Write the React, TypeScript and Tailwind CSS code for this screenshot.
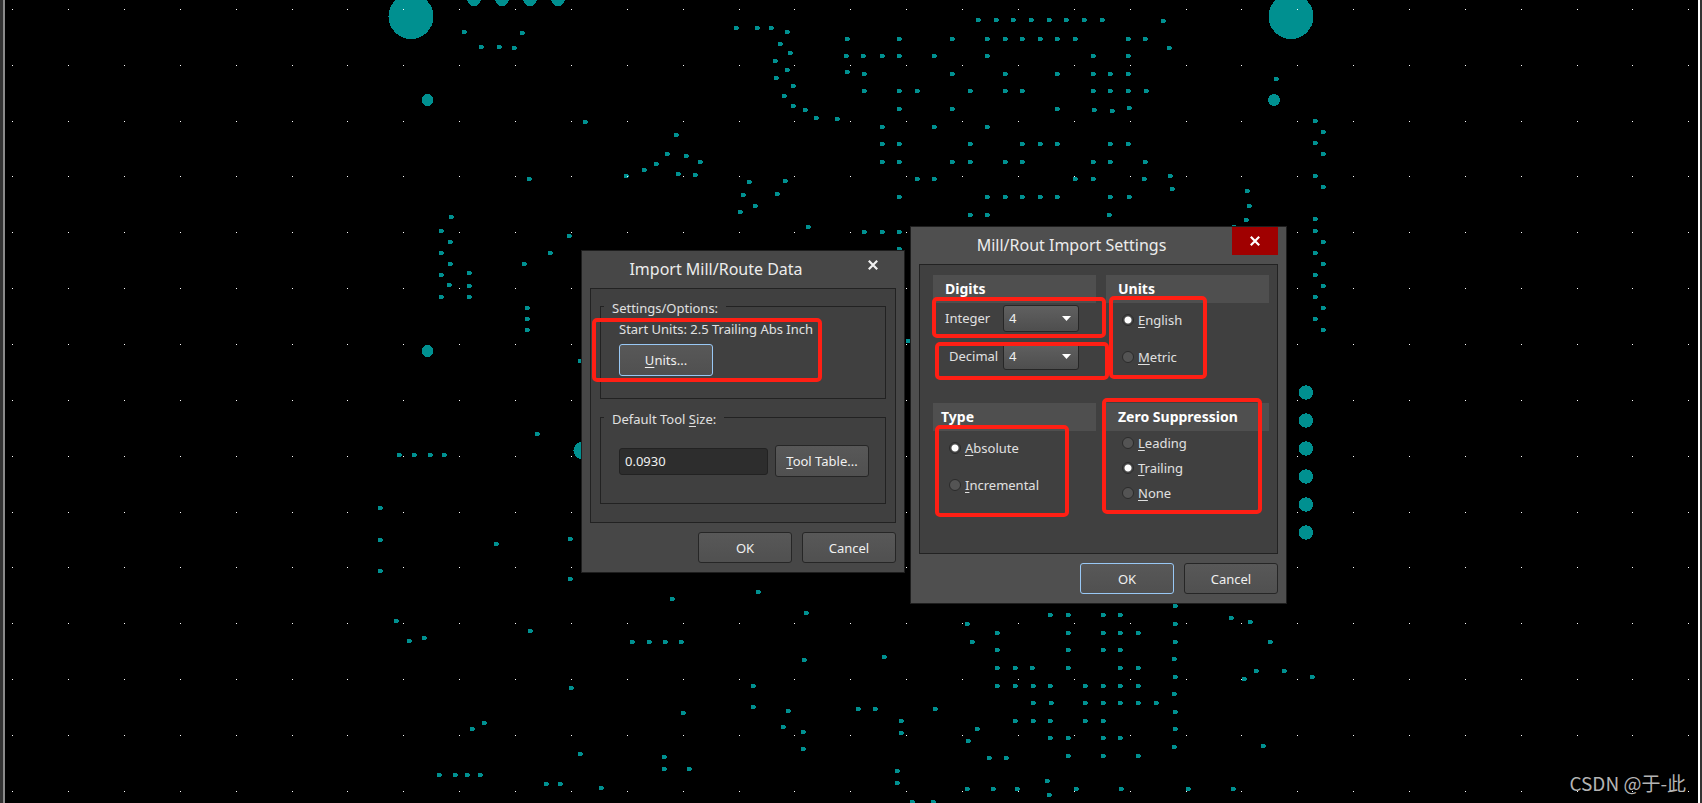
import React from 'react';

type Point = [number, number];

// Drill hits grouped by row: [y, x, x, ...]
const HIT_ROWS: number[][] = [
  [20, 978, 996, 1013, 1031, 1049, 1066, 1084, 1102],
  [28, 736, 757, 771],
  [39, 847, 899, 952, 987, 1005, 1022, 1040, 1057, 1075, 1128, 1145],
  [47, 481, 499],
  [56, 846, 863, 882, 899, 934, 987, 1093, 1128],
  [74, 864, 952, 1005, 1057, 1093, 1110, 1128],
  [91, 864, 899, 917, 970, 1005, 1022, 1093, 1110, 1128, 1146],
  [109, 899, 952, 1057],
  [127, 882, 934, 987],
  [144, 882, 899, 970, 1022, 1040, 1057, 1110, 1128],
  [162, 882, 899, 952, 970, 1005, 1022, 1093, 1110, 1145],
  [179, 917, 934, 1075, 1093, 1144],
  [197, 899, 987, 1005, 1022, 1040, 1057, 1110, 1129],
  [215, 970, 987, 1109],
  [232, 864, 882, 899],
  [455, 399, 414, 430, 444],
  [615, 1050, 1068, 1103, 1120],
  [633, 997, 1068, 1103, 1120, 1138],
  [642, 632, 649, 665, 681],
  [650, 997, 1068, 1103, 1120],
  [668, 997, 1015, 1032, 1068, 1120, 1138],
  [686, 997, 1015, 1033, 1050, 1085, 1103, 1120, 1138],
  [703, 1033, 1051, 1085, 1103, 1120, 1138, 1156],
  [709, 858, 875, 935],
  [721, 1015, 1033, 1050, 1085, 1103],
  [738, 1050, 1068, 1103, 1120],
  [756, 1068, 1103, 1138],
  [758, 989, 1006],
  [775, 439, 455, 467, 480],
  [784, 546, 560],
  [789, 967, 993, 1017, 1076, 1121, 1188, 1233],
  [802, 912, 933],
];

const HITS: Point[] = [
  [464, 32], [522, 33], [514, 48], [585, 122], [676, 135], [667, 154], [686, 156], [700, 162],
  [656, 164], [644, 170], [626, 176], [678, 174], [695, 175], [529, 179], [451, 217], [441, 231],
  [450, 242], [441, 253], [569, 236], [550, 253], [450, 264], [469, 273], [524, 264], [441, 275],
  [449, 285], [469, 286], [441, 297], [469, 297], [527, 308], [527, 319], [527, 330], [580, 361],
  [537, 434], [380, 508], [380, 540], [380, 571], [496, 544], [570, 539], [570, 579], [899, 249],
  [908, 341], [787, 32], [780, 44], [790, 53], [775, 61], [787, 70], [776, 78], [793, 86],
  [784, 96], [793, 106], [805, 110], [816, 118], [837, 119], [847, 72], [1163, 21], [1169, 48],
  [1094, 110], [1112, 111], [1129, 108], [1170, 176], [1172, 189], [749, 182], [785, 181], [743, 195],
  [777, 194], [755, 206], [740, 212], [808, 227], [1276, 79], [1315, 121], [1323, 132], [1315, 143],
  [1323, 154], [1315, 176], [1323, 187], [1315, 219], [1315, 231], [1247, 191], [1249, 206], [1246, 220],
  [1234, 227], [1323, 242], [1315, 253], [1323, 264], [1315, 275], [1323, 286], [1315, 297], [1323, 308],
  [1315, 319], [1323, 330], [396, 621], [409, 641], [424, 638], [530, 631], [672, 599], [571, 688],
  [683, 713], [472, 729], [484, 723], [580, 754], [664, 757], [664, 769], [689, 769], [601, 788],
  [758, 592], [806, 613], [804, 660], [884, 657], [753, 686], [753, 707], [788, 711], [783, 727],
  [803, 732], [803, 749], [901, 721], [901, 733], [977, 729], [968, 741], [989, 758], [897, 771],
  [897, 783], [967, 624], [972, 642], [1175, 606], [1175, 624], [1175, 642], [1174, 659], [1175, 677],
  [1174, 694], [1175, 712], [1175, 729], [1174, 747], [1231, 618], [1250, 622], [1270, 642], [1256, 671],
  [1284, 671], [1244, 679], [1312, 677], [1263, 746], [1047, 781], [1049, 795],
];

// x, y, radius
const PADS: [number, number, number][] = [
  [411, 16.5, 22.5], [1291, 16.5, 22.5],
  [474, -1, 7], [502, -1, 7], [530, -1, 7], [558, -1, 7],
  [427.5, 100, 6], [1274, 100, 6], [427.5, 351, 6], [582, 450.5, 8.5],
  [1306, 392.5, 7.2], [1306, 420.5, 7.2], [1306, 448.5, 7.2], [1306, 476.5, 7.2], [1306, 504.5, 7.2], [1306, 532.5, 7.2],
];

const GRID: Point[] = Array.from({ length: 31 * 15 }, (_, i) => [
  Math.floor(12.75 + (i % 31) * 55.87),
  Math.floor(9.4 + Math.floor(i / 31) * 55.85),
]);

// Small hits are a 4px block with a one pixel spur
const Hit = ({ x, y }: { x: number; y: number }) => (
  <path d={`M${x - 2} ${y - 2}h4v1h1v2h-1v1h-4z`} />
);

const BoardCanvas = () => (
  <svg className="absolute left-0 top-0" width="1698" height="803" aria-hidden="true">
    <g fill="#009090" shapeRendering="crispEdges">
      {PADS.map(([x, y, r]) => <circle key={`${x}-${y}`} cx={x} cy={y} r={r} />)}
      {HIT_ROWS.map(([y, ...xs]) => xs.map((x) => <Hit key={`${x}-${y}`} x={x} y={y} />))}
      {HITS.map(([x, y]) => <Hit key={`${x}-${y}`} x={x} y={y} />)}
    </g>
    <g fill="#ffffff" shapeRendering="crispEdges">
      {GRID.map(([x, y]) => <rect key={`${x}-${y}`} x={x} y={y} width="1" height="1" />)}
    </g>
  </svg>
);

interface DialogProps {
  title: string;
  frameClass: string;
  closeClass: string;
  okClass: string;
  children: React.ReactNode;
}

const BUTTON = 'w-[94px] rounded-[3px] border bg-linear-to-b from-[#585858] to-[#505050] text-center text-[#f0f0f0]';

const Dialog: React.FC<DialogProps> = ({ title, frameClass, closeClass, okClass, children }) => (
  <section role="dialog" aria-label={title} className={`absolute border border-[#1e1e1e] ${frameClass}`}>
    <header className="flex h-[37px] items-start pr-2">
      <h2 className="flex-1 text-center text-[16px] leading-[37px] text-[#ececec]">{title}</h2>
      <button aria-label="Close" className={`flex h-7 w-[46px] items-center justify-center ${closeClass}`}>
        <svg width="10" height="10" viewBox="0 0 10 10" stroke="currentColor" strokeWidth="2.2">
          <path d="M0.8 0.8 L9.2 9.2 M9.2 0.8 L0.8 9.2" />
        </svg>
      </button>
    </header>
    <div className="px-2">{children}</div>
    <footer className="flex justify-end gap-[10px] px-2 py-[9px]">
      <button className={`h-[31px] ${BUTTON} ${okClass}`}>OK</button>
      <button className={`h-[31px] ${BUTTON} border-[#262626]`}>Cancel</button>
    </footer>
  </section>
);

interface SectionProps {
  title: string;
  titleClass: string;
  children: React.ReactNode;
}

const Section: React.FC<SectionProps> = ({ title, titleClass, children }) => (
  <div>
    <h3 className={`h-7 bg-[#4f4f4f] text-[14px] font-bold leading-7 text-white ${titleClass}`}>{title}</h3>
    {children}
  </div>
);

interface RadioProps {
  group: string;
  label: string;
  checked?: boolean;
}

const Radio: React.FC<RadioProps> = ({ group, label, checked }) => (
  <label className="flex h-5 items-center gap-1">
    <input
      type="radio"
      name={group}
      defaultChecked={checked}
      className="size-3 appearance-none rounded-full border border-[#2b2b2b] bg-[#545454] checked:bg-[radial-gradient(circle,#ffffff_3px,#484848_4px)]"
    />
    <span><u className="underline-offset-2">{label[0]}</u>{label.slice(1)}</span>
  </label>
);

const DigitSelect = ({ id, label, labelClass }: { id: string; label: string; labelClass: string }) => (
  <div className="flex h-[27px] items-center">
    <label htmlFor={id} className={`w-[70px] pb-[2px] ${labelClass}`}>{label}</label>
    <div className="relative">
      <select
        id={id}
        defaultValue="4"
        className="block h-[27px] w-[76px] appearance-none rounded-[3px] border border-[#262626] bg-linear-to-b from-[#606060] to-[#4e4e4e] px-[5px] pb-[2px] text-[#f0f0f0]"
      >
        {['2', '3', '4', '5'].map((n) => <option key={n}>{n}</option>)}
      </select>
      <svg className="pointer-events-none absolute right-2 top-[11px]" width="9" height="5" viewBox="0 0 9 5">
        <path d="M0 0 H9 L4.5 5 Z" fill="#ffffff" />
      </svg>
    </div>
  </div>
);

const Highlight = ({ place }: { place: string }) => (
  <div className={`pointer-events-none absolute rounded-[5px] border-4 border-[#ff1f14] ${place}`} />
);

const FIELDSET = 'border border-[#222222]';
const LEGEND = 'ml-[3px] px-2 pt-1';

const ImportDialog = () => (
  <Dialog
    title="Import Mill/Route Data"
    frameClass="left-[581px] top-[250px] w-[324px] bg-[#474747]"
    closeClass="text-[#f0f0f0]"
    okClass="border-[#262626]"
  >
    <div className="border border-[#222222] bg-[#404040] px-[9px] pb-[18px] pt-[5px]">
      <fieldset className={`h-[105px] ${FIELDSET}`}>
        <legend className={LEGEND}>Settings/Options:</legend>
        <div className="flex flex-col items-start gap-[5px] pl-[18px] pt-px">
          <p>Start Units: 2.5 Trailing Abs Inch</p>
          <button className={`h-8 ${BUTTON} border-[#99c8f5]`}><u className="underline-offset-2">U</u>nits...</button>
        </div>
      </fieldset>
      <fieldset className={`mt-[6px] h-[99px] ${FIELDSET}`}>
        <legend className={LEGEND}><label htmlFor="tool-size">Default Tool <u className="underline-offset-2">S</u>ize:</label></legend>
        <div className="flex items-center gap-[7px] pl-[18px] pt-4">
          <input
            id="tool-size"
            defaultValue="0.0930"
            className="h-[27px] w-[149px] rounded-[3px] border border-[#222222] bg-[#2d2d2d] px-[5px] text-[#f0f0f0]"
          />
          <button className={`h-8 ${BUTTON} border-[#262626]`}><u className="underline-offset-2">T</u>ool Table...</button>
        </div>
      </fieldset>
    </div>
    <Highlight place="left-[10px] top-[67px] h-[64px] w-[230px]" />
  </Dialog>
);

const SettingsDialog = () => (
  <Dialog
    title="Mill/Rout Import Settings"
    frameClass="left-[910px] top-[226px] w-[377px] bg-[#4f4f4f]"
    closeClass="bg-[#a00000] text-white"
    okClass="border-[#99c8f5]"
  >
    <div className="grid h-[290px] grid-cols-2 grid-rows-[128px_1fr] gap-x-[10px] border border-[#222222] bg-[#404040] pl-[13px] pr-2 pt-[10px]">
      <Section title="Digits" titleClass="pl-3">
        <div className="flex flex-col gap-[11px] pt-[2px]">
          <DigitSelect id="integer" label="Integer" labelClass="pl-3" />
          <DigitSelect id="decimal" label="Decimal" labelClass="pl-4" />
        </div>
      </Section>
      <Section title="Units" titleClass="pl-3">
        <div className="flex flex-col gap-[17px] pl-4 pt-[7px]">
          <Radio group="units" label="English" checked />
          <Radio group="units" label="Metric" />
        </div>
      </Section>
      <Section title="Type" titleClass="pl-2">
        <div className="flex flex-col gap-[17px] pl-4 pt-[7px]">
          <Radio group="type" label="Absolute" checked />
          <Radio group="type" label="Incremental" />
        </div>
      </Section>
      <Section title="Zero Suppression" titleClass="pl-3">
        <div className="flex flex-col gap-[5px] pl-4 pt-[2px]">
          <Radio group="zero" label="Leading" />
          <Radio group="zero" label="Trailing" checked />
          <Radio group="zero" label="None" />
        </div>
      </Section>
    </div>
    <Highlight place="left-[21px] top-[70px] h-[41px] w-[174px]" />
    <Highlight place="left-[24px] top-[115px] h-[38px] w-[174px]" />
    <Highlight place="left-[198px] top-[69px] h-[83px] w-[98px]" />
    <Highlight place="left-[191px] top-[171px] h-[116px] w-[160px]" />
    <Highlight place="left-[24px] top-[198px] h-[92px] w-[134px]" />
  </Dialog>
);

export default function App() {
  return (
    <div className="relative flex h-screen justify-between overflow-hidden bg-black font-['Noto_Sans',sans-serif] text-[13px] leading-5 text-[#e0e0e0]">
      <BoardCanvas />
      <div className="relative w-[5px] border-r-2 border-[#8a8a8a] bg-[#333333]" />
      <div className="relative w-1 border-l-2 border-white bg-[#333333]" />
      <ImportDialog />
      <SettingsDialog />
      <p className="absolute bottom-[6px] right-4 font-['Noto_Sans_CJK_SC',sans-serif] text-[19px] leading-7 text-[#b4b4b4]">CSDN @于-此</p>
    </div>
  );
}
